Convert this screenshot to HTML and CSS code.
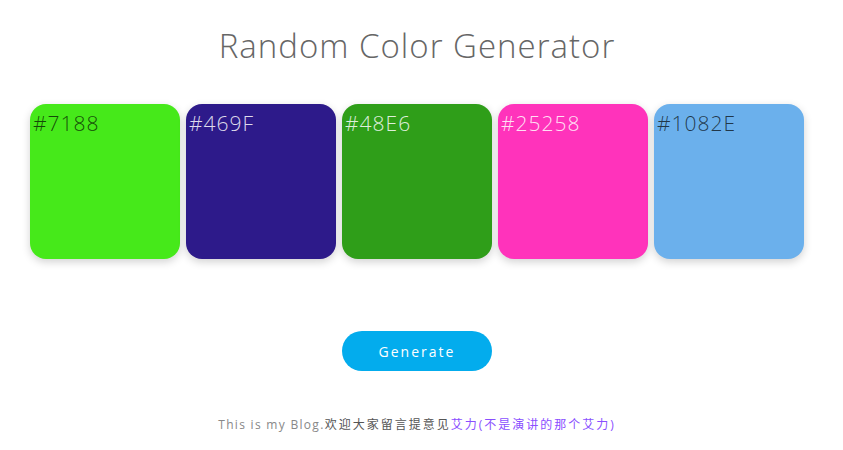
FILE: index.html
```html
<!DOCTYPE html>
<html>
<head>
<meta charset="utf-8">
<link rel="stylesheet" href="styles.css">
</head>
<body>
<h1 class="title">Random Color Generator</h1>
<div class="palette">
  <div class="swatch dark" style="background:#46e91a">#7188</div>
  <div class="swatch light" style="background:#2d1a8a">#469F</div>
  <div class="swatch light" style="background:#2f9e19">#48E6</div>
  <div class="swatch light" style="background:#ff33bb">#25258</div>
  <div class="swatch dark" style="background:#6bb0ec">#1082E</div>
</div>
<div class="actions"><button class="btn">Generate</button></div>
<p class="footer"><span class="latin">This is my Blog.</span>欢迎大家留言提意见<a class="link" href="#">艾力(不是演讲的那个艾力)</a></p>
</body>
</html>
```
FILE: styles.css
```css
html, body { margin: 0; padding: 0; background: #fff; }
body { font-family: "Open Sans", "Noto Sans", "Noto Sans CJK SC", sans-serif; width: 834px; height: 450px; overflow: hidden; }
.title {
  margin: 0; padding-top: 24px; text-align: center;
  font-weight: 300; font-size: 33px; line-height: 44px; letter-spacing: 1px;
  color: #666;
}
.palette { display: flex; gap: 6px; padding: 36px 0 0 30px; }
.swatch {
  width: 150px; height: 155px; border-radius: 16px;
  box-shadow: 0 3px 8px rgba(0,0,0,0.18);
  font-size: 21px; font-weight: 300; letter-spacing: 1px;
  padding: 6px 3px; box-sizing: border-box; line-height: 26px;
}
.swatch.dark { color: rgba(0,0,0,0.7); }
.swatch.light { color: rgba(255,255,255,0.85); }
.actions { display: flex; justify-content: center; padding-top: 72px; }
.btn {
  width: 150px; height: 40px; border: none; border-radius: 20px;
  background: #03aced; color: #fff; font-family: inherit;
  font-size: 14px; letter-spacing: 2px; font-weight: 400;
}
.footer {
  margin: 0; padding-top: 44px; text-align: center;
  font-size: 12px; letter-spacing: 2px; color: #555;
}
.footer .latin { letter-spacing: 1.3px; color: #888; }
.footer .link { color: #8a4fff; text-decoration: none; }
```
